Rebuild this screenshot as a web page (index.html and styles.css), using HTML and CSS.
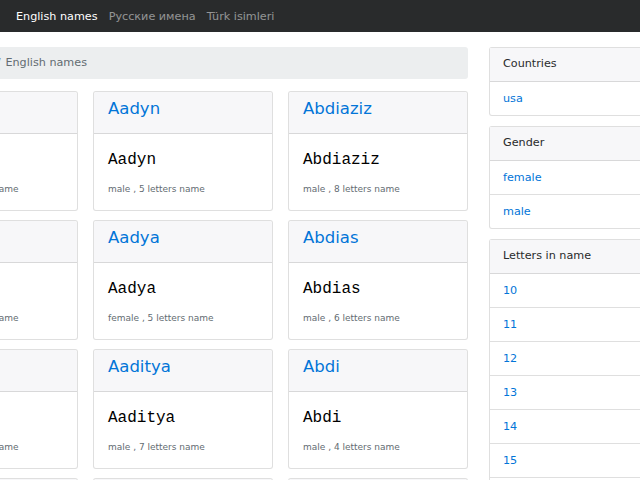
FILE: index.html
```html
<!DOCTYPE html>
<html lang="en">
<head>
<meta charset="utf-8">
<title>English names</title>
<link rel="stylesheet" href="styles.css">
</head>
<body>
<nav class="navbar">
  <a class="nav-link active" href="#">English names</a>
  <a class="nav-link" href="#">Русские имена</a>
  <a class="nav-link" href="#">Türk isimleri</a>
</nav>
<div class="page">
  <main class="main">
    <ol class="breadcrumb">
      <li class="crumb"><a href="#">Home</a></li>
      <li class="crumb"><a href="#">Names</a></li>
      <li class="crumb current">English names</li>
    </ol>
    <div class="grid">
      <div class="card"><div class="card-header"><a class="card-title" href="#">Aadhya</a></div><div class="card-body"><div class="name">Aadhya</div><div class="meta">female , 6 letters name</div></div></div>
      <div class="card"><div class="card-header"><a class="card-title" href="#">Aadyn</a></div><div class="card-body"><div class="name">Aadyn</div><div class="meta">male , 5 letters name</div></div></div>
      <div class="card"><div class="card-header"><a class="card-title" href="#">Abdiaziz</a></div><div class="card-body"><div class="name">Abdiaziz</div><div class="meta">male , 8 letters name</div></div></div>

      <div class="card"><div class="card-header"><a class="card-title" href="#">Aadila</a></div><div class="card-body"><div class="name">Aadila</div><div class="meta">female , 6 letters name</div></div></div>
      <div class="card"><div class="card-header"><a class="card-title" href="#">Aadya</a></div><div class="card-body"><div class="name">Aadya</div><div class="meta">female , 5 letters name</div></div></div>
      <div class="card"><div class="card-header"><a class="card-title" href="#">Abdias</a></div><div class="card-body"><div class="name">Abdias</div><div class="meta">male , 6 letters name</div></div></div>

      <div class="card"><div class="card-header"><a class="card-title" href="#">Aadira</a></div><div class="card-body"><div class="name">Aadira</div><div class="meta">female , 6 letters name</div></div></div>
      <div class="card"><div class="card-header"><a class="card-title" href="#">Aaditya</a></div><div class="card-body"><div class="name">Aaditya</div><div class="meta">male , 7 letters name</div></div></div>
      <div class="card"><div class="card-header"><a class="card-title" href="#">Abdi</a></div><div class="card-body"><div class="name">Abdi</div><div class="meta">male , 4 letters name</div></div></div>

      <div class="card"><div class="card-header"><a class="card-title" href="#">Aadrika</a></div><div class="card-body"><div class="name">Aadrika</div><div class="meta">female , 7 letters name</div></div></div>
      <div class="card"><div class="card-header"><a class="card-title" href="#">Aahil</a></div><div class="card-body"><div class="name">Aahil</div><div class="meta">male , 5 letters name</div></div></div>
      <div class="card"><div class="card-header"><a class="card-title" href="#">Abdirahman</a></div><div class="card-body"><div class="name">Abdirahman</div><div class="meta">male , 10 letters name</div></div></div>
    </div>
  </main>
  <aside class="sidebar">
    <div class="side-card">
      <div class="side-header">Countries</div>
      <a class="side-item" href="#">usa</a>
    </div>
    <div class="side-card">
      <div class="side-header">Gender</div>
      <a class="side-item" href="#">female</a>
      <a class="side-item" href="#">male</a>
    </div>
    <div class="side-card">
      <div class="side-header">Letters in name</div>
      <a class="side-item" href="#">10</a>
      <a class="side-item" href="#">11</a>
      <a class="side-item" href="#">12</a>
      <a class="side-item" href="#">13</a>
      <a class="side-item" href="#">14</a>
      <a class="side-item" href="#">15</a>
      <a class="side-item" href="#">16</a>
    </div>
  </aside>
</div>
</body>
</html>
```
FILE: styles.css
```css
html, body {
  margin: 0;
  overflow: hidden;
}
body {
  font-family: "DejaVu Sans", sans-serif;
  font-size: 11.2px;
  line-height: 1.5;
  color: #292b2c;
  background: #fff;
}
a {
  color: #0275d8;
  text-decoration: none;
}
.navbar {
  background: #292b2c;
  height: 32px;
  display: flex;
  align-items: center;
  padding-left: 10.4px;
}
.nav-link {
  padding: 0 5.6px;
  color: rgba(255, 255, 255, 0.5);
  line-height: 17px;
}
.nav-link.active {
  color: #fff;
}
.page {
  display: flex;
  align-items: flex-start;
  margin: 15px 0 0 -102px;
}
.main {
  width: 570px;
  flex-shrink: 0;
}
.breadcrumb {
  list-style: none;
  margin: 0 0 12px;
  padding: 7px 11.5px 8px 12px;
  line-height: 17px;
  background: #eceeef;
  border-radius: 3px;
  display: flex;
}
.crumb + .crumb::before {
  content: "/";
  padding: 0 5px 0 3px;
  color: #636c72;
}
.crumb.current {
  color: #636c72;
}
.grid {
  display: grid;
  grid-template-columns: repeat(3, 180px);
  column-gap: 15px;
  row-gap: 9px;
}
.card {
  border: 1px solid rgba(0, 0, 0, 0.125);
  border-radius: 3px;
  background: #fff;
}
.card-header {
  background: #f7f7f9;
  border-bottom: 1px solid rgba(0, 0, 0, 0.125);
  padding: 6px 14px 8px;
  border-radius: 3px 3px 0 0;
}
.card-title {
  display: block;
  font-size: 16.5px;
  line-height: 21px;
  margin-bottom: 6px;
}
.card-body {
  padding: 14px 14px 14px;
}
.name {
  font-family: "Liberation Mono", monospace;
  font-size: 16px;
  line-height: 24px;
  color: #000;
}
.meta {
  margin-top: 10px;
  font-size: 9px;
  line-height: 14px;
  color: #636c72;
}
.sidebar {
  margin-left: 21px;
  width: 220px;
  flex-shrink: 0;
}
.side-card {
  border: 1px solid rgba(0, 0, 0, 0.125);
  border-radius: 3px;
  margin-bottom: 10px;
  background: #fff;
}
.side-header {
  background: #f7f7f9;
  padding: 7px 13px 9px;
  line-height: 17px;
  border-bottom: 1px solid rgba(0, 0, 0, 0.125);
}
.side-item {
  display: block;
  padding: 8px 13px;
  line-height: 17px;
  border-bottom: 1px solid rgba(0, 0, 0, 0.125);
}
.side-item:last-child {
  border-bottom: 0;
}
```
